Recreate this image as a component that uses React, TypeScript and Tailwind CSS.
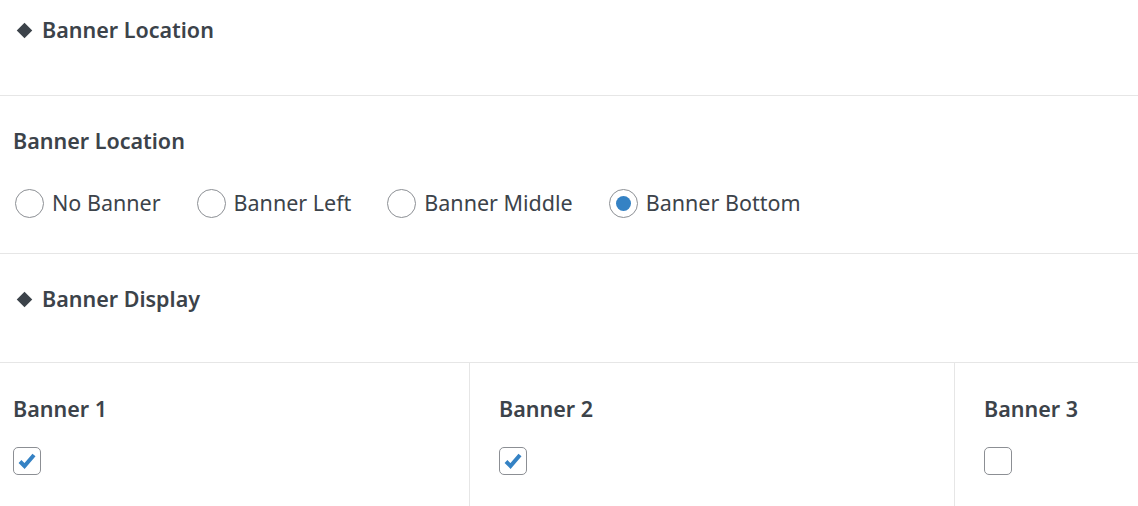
import { useState } from "react";

const font = { fontFamily: '"Noto Sans", "Open Sans", sans-serif' };

const SectionTitle = ({ title, className }: { title: string; className: string }) => (
  <div className={`border-b border-[#e6e6e6] pl-[17px] ${className}`}>
    <div className="flex items-center gap-[12px] text-[21.5px] leading-[30px] font-semibold text-[#3c434a]">
      <span className="ml-[2px] inline-block h-[11px] w-[11px] rotate-45 bg-[#3c434a]" />
      <span>{title}</span>
    </div>
  </div>
);

const Radio = ({ label, checked, onClick }: { label: string; checked: boolean; onClick: () => void }) => (
  <label className="flex cursor-pointer items-center gap-[8px]" onClick={onClick}>
    <span className="flex h-[29px] w-[29px] items-center justify-center rounded-full border border-[#8c8f94] bg-white">
      {checked && <span className="h-[15px] w-[15px] rounded-full bg-[#3582c4]" />}
    </span>
    <span className="text-[21.5px] leading-[30px] text-[#3c434a]">{label}</span>
  </label>
);

const Checkbox = ({ checked, onClick }: { checked: boolean; onClick: () => void }) => (
  <button
    onClick={onClick}
    className="flex h-[28px] w-[28px] items-center justify-center rounded-[5px] border border-[#8c8f94] bg-white"
  >
    {checked && (
      <svg width="22" height="22" viewBox="0 0 22 22">
        <path d="M4 11.5 L8.5 16 L18 5" fill="none" stroke="#3582c4" strokeWidth="4" strokeLinecap="butt" strokeLinejoin="miter" />
      </svg>
    )}
  </button>
);

export default function App() {
  const locations = ["No Banner", "Banner Left", "Banner Middle", "Banner Bottom"];
  const [location, setLocation] = useState("Banner Bottom");
  const [banners, setBanners] = useState([true, true, false]);

  return (
    <div className="w-[1138px] bg-white" style={font}>
      <SectionTitle title="Banner Location" className="h-[96px] pt-[15px]" />

      <div className="h-[158px] border-b border-[#e6e6e6] px-[13px] pt-[30px]">
        <div className="text-[21.5px] leading-[30px] font-semibold text-[#3c434a]">Banner Location</div>
        <div className="mt-[32px] flex items-center gap-[36px] pl-[2px]">
          {locations.map((l) => (
            <Radio key={l} label={l} checked={location === l} onClick={() => setLocation(l)} />
          ))}
        </div>
      </div>

      <SectionTitle title="Banner Display" className="h-[109px] pt-[30px]" />

      <div className="grid grid-cols-[470px_485px_1fr]">
        {banners.map((b, i) => (
          <div
            key={i}
            className={`h-[143px] pt-[31px] ${i === 0 ? "pl-[13px]" : "pl-[29px]"} ${i < 2 ? "border-r border-[#e6e6e6]" : ""}`}
          >
            <div className="text-[21.5px] leading-[30px] font-semibold text-[#3c434a]">Banner {i + 1}</div>
            <div className="mt-[23px]">
              <Checkbox
                checked={b}
                onClick={() => setBanners(banners.map((v, j) => (j === i ? !v : v)))}
              />
            </div>
          </div>
        ))}
      </div>
    </div>
  );
}
